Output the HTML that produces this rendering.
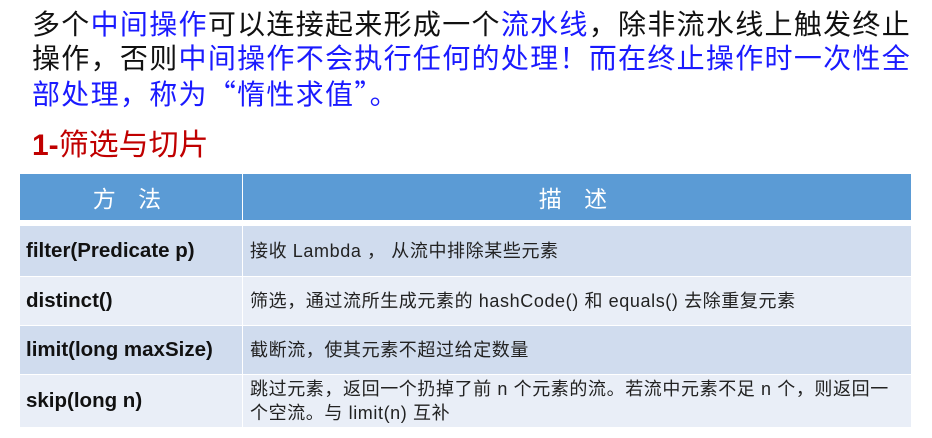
<!DOCTYPE html>
<html><head><meta charset="utf-8"><style>
body{margin:0;width:932px;height:438px;background:#fff;position:relative;overflow:hidden;font-family:"Liberation Sans","Noto Sans CJK SC",sans-serif}
.p{position:absolute;left:32px;top:8px;font-size:28px;letter-spacing:1.3px;line-height:34px;color:#111;white-space:nowrap}
.b{color:#1a1aff}
.q{font-family:"Noto Sans CJK SC",sans-serif}
.t{position:absolute;left:32px;top:128px;font-size:30px;line-height:36px;color:#c00000}
.c{position:absolute;display:flex;align-items:center;box-sizing:border-box}
.h{background:#5b9bd5;color:#fff;font-size:23px;justify-content:center;letter-spacing:8px;top:174px;height:46px}
.m{left:20px;width:222px;padding-left:6px;font-weight:bold;font-size:20.5px;color:#111}
.d{left:243px;width:668px;padding-left:7px;font-size:18px;letter-spacing:0.6px;color:#222;line-height:24px;white-space:nowrap}
.o{background:#d0dcee}.e{background:#e9eef7}
</style></head><body>
<div class="p">多个<span class="b">中间操作</span>可以连接起来形成一个<span class="b">流水线</span>，除非流水线上触发终止<br>操作，否则<span class="b">中间操作不会执行任何的处理！</span><span class="b">而在终止操作时一次性全</span><br><span class="b">部处理，称为<span class="q">“</span>惰性求值<span class="q">”</span>。</span></div>
<div class="t"><b>1-</b>筛选与切片</div>
<div class="c h" style="left:20px;width:222px">方 法</div>
<div class="c h" style="left:243px;width:668px">描 述</div>
<div class="c m o" style="top:226px;height:50px">filter(Predicate p)</div>
<div class="c d o" style="top:226px;height:50px">接收 Lambda ， 从流中排除某些元素</div>
<div class="c m e" style="top:277px;height:48px">distinct()</div>
<div class="c d e" style="top:277px;height:48px">筛选，通过流所生成元素的 hashCode() 和 equals() 去除重复元素</div>
<div class="c m o" style="top:326px;height:48px">limit(long maxSize)</div>
<div class="c d o" style="top:326px;height:48px">截断流，使其元素不超过给定数量</div>
<div class="c m e" style="top:375px;height:52px">skip(long n)</div>
<div class="c d e" style="top:375px;height:52px">跳过元素，返回一个扔掉了前 n 个元素的流。若流中元素不足 n 个，则返回一<br>个空流。与 limit(n) 互补</div>
</body></html>
